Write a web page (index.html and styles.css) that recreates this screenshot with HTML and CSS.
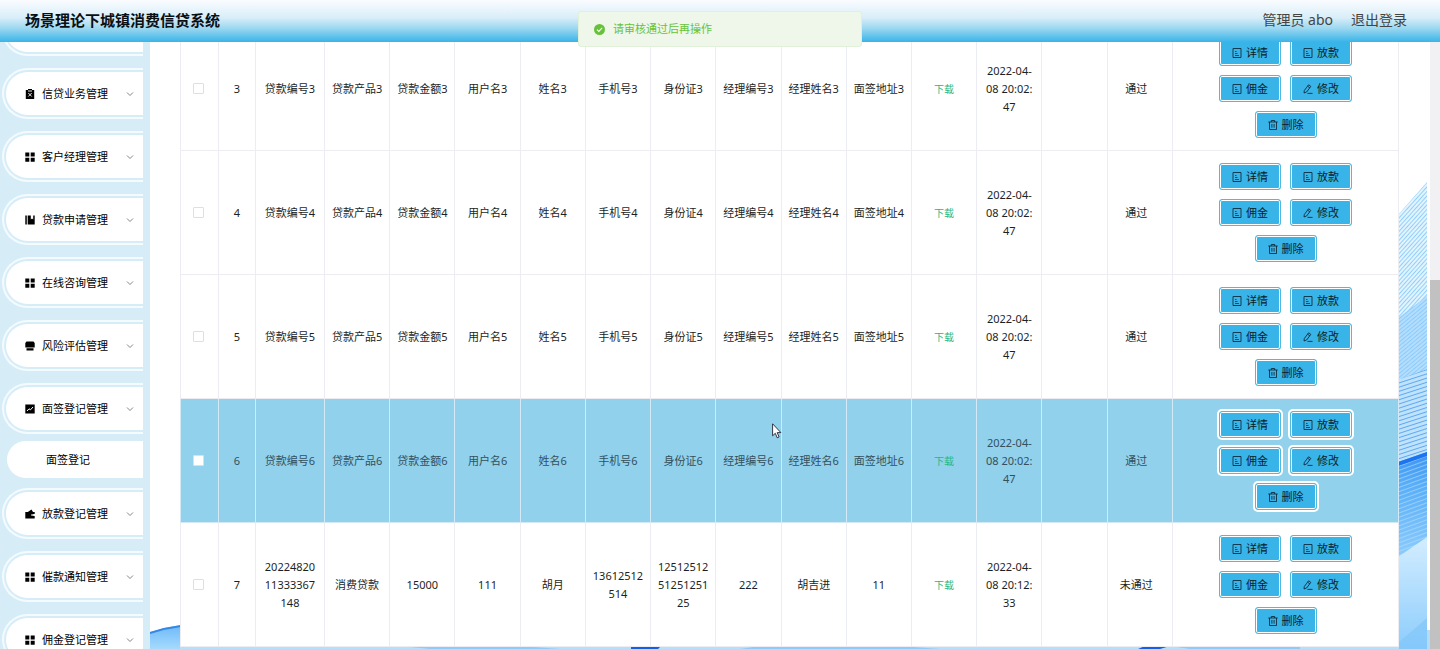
FILE: index.html
```html
<!DOCTYPE html>
<html lang="zh-CN">
<head>
<meta charset="utf-8">
<title>场景理论下城镇消费信贷系统</title>
<link rel="stylesheet" href="styles.css">
</head>
<body>
<svg class="sprite" aria-hidden="true">
  <symbol id="i-doc" viewBox="0 0 10 10"><path d="M1 .5h8v9H1z" fill="none" stroke="currentColor" stroke-width=".8"/><path d="M3 3.500h1.500M3 5.500h2.500M3 7.500h4" fill="none" stroke="currentColor" stroke-width=".7"/></symbol>
  <symbol id="i-edit" viewBox="0 0 10 10"><path d="M1.300 6.500 5.600.8 7.800 2.400 3.600 8 1 9zM4.500 9.400h5M4.600 2.200l2.200 1.600" fill="none" stroke="currentColor" stroke-width=".8"/></symbol>
  <symbol id="i-del" viewBox="0 0 10 10"><path d="M.3 2h9.400M1.500 2v7.500h7V2M3.300 2V.5h3.400V2M3.900 4v3.700M6.100 4v3.700" fill="none" stroke="currentColor" stroke-width=".8"/></symbol>
  <symbol id="i-grid" viewBox="0 0 10 10"><path d="M.3.5h4v4h-4zM5.700.5h4v4h-4zM.3 5.700h4v4h-4zM5.700 5.700h4v4h-4z"/></symbol>
  <symbol id="i-clip" viewBox="0 0 10 10"><path d="M.8 1H3V0h4v1h2.200v9H.8z"/><path d="M3.300 4l3.400 3.500M6.700 4 3.300 7.500M3 2h4" stroke="#fff" stroke-width=".9"/></symbol>
  <symbol id="i-book" viewBox="0 0 10 10"><path d="M.3.5h1.500v9H.3zM2.700.5h3.100v4l1.200-1 1.200 1v-4h1.500v9h-7z"/></symbol>
  <symbol id="i-print" viewBox="0 0 10 10"><path d="M1.500.5h7L9.700 2v4.500H.3V2zM1.500 7.300h7v2.200h-7z"/></symbol>
  <symbol id="i-chart" viewBox="0 0 10 10"><path d="M.3.5h9.400v9H.3z"/><path d="M2 7l2-2.200 1.500 1L8 3" fill="none" stroke="#fff"/></symbol>
  <symbol id="i-wallet" viewBox="0 0 10 10"><path d="M.3 3h2.500L6.500.5 8 3h1.700v2H6.500v2h3.200v2.500H.3zM7.300 5.600h1v.9h-1z"/></symbol>
  <symbol id="i-down" viewBox="0 0 8 8"><path d="M1 2.500 4 5.500 7 2.500" fill="none" stroke="currentColor" stroke-width=".9"/></symbol>
</svg>

<header class="topbar">
  <h1 class="brand">场景理论下城镇消费信贷系统</h1>
  <div class="account"><span>管理员 abo</span><a class="logout" href="#">退出登录</a></div>
</header>

<div class="toast" role="status">
  <svg class="toast-icon" viewBox="0 0 10 10"><circle cx="5" cy="5" r="5" fill="#67c23a"/><path d="M2.700 5.100 4.400 6.700 7.400 3.600" fill="none" stroke="#fff"/></svg>
  <span>请审核通过后再操作</span>
</div>

<div class="shell">
  <nav class="sidebar">
    <ul class="menu">
      <li class="menu-item"><button class="menu-btn" type="button"></button></li>
      <li class="menu-item"><button class="menu-btn" type="button"><svg class="icon"><use href="#i-clip"/></svg><span>信贷业务管理</span><svg class="arrow"><use href="#i-down"/></svg></button></li>
      <li class="menu-item"><button class="menu-btn" type="button"><svg class="icon"><use href="#i-grid"/></svg><span>客户经理管理</span><svg class="arrow"><use href="#i-down"/></svg></button></li>
      <li class="menu-item"><button class="menu-btn" type="button"><svg class="icon"><use href="#i-book"/></svg><span>贷款申请管理</span><svg class="arrow"><use href="#i-down"/></svg></button></li>
      <li class="menu-item"><button class="menu-btn" type="button"><svg class="icon"><use href="#i-grid"/></svg><span>在线咨询管理</span><svg class="arrow"><use href="#i-down"/></svg></button></li>
      <li class="menu-item"><button class="menu-btn" type="button"><svg class="icon"><use href="#i-print"/></svg><span>风险评估管理</span><svg class="arrow"><use href="#i-down"/></svg></button></li>
      <li class="menu-item open"><button class="menu-btn" type="button"><svg class="icon"><use href="#i-chart"/></svg><span>面签登记管理</span><svg class="arrow"><use href="#i-down"/></svg></button></li>
      <li class="submenu"><a class="sub-link" href="#">面签登记</a></li>
      <li class="menu-item"><button class="menu-btn" type="button"><svg class="icon"><use href="#i-wallet"/></svg><span>放款登记管理</span><svg class="arrow"><use href="#i-down"/></svg></button></li>
      <li class="menu-item"><button class="menu-btn" type="button"><svg class="icon"><use href="#i-grid"/></svg><span>催款通知管理</span><svg class="arrow"><use href="#i-down"/></svg></button></li>
      <li class="menu-item"><button class="menu-btn" type="button"><svg class="icon"><use href="#i-grid"/></svg><span>佣金登记管理</span><svg class="arrow"><use href="#i-down"/></svg></button></li>
    </ul>
  </nav>

  <main class="main">
    <svg class="backdrop" viewBox="150 42 1280 607" preserveAspectRatio="xMaxYMax slice" aria-hidden="true">
      <defs>
        <pattern id="p1" width="5" height="3" patternUnits="userSpaceOnUse" patternTransform="rotate(-48)"><rect width="5" height="3" fill="#e4f4ff"/><rect width="5" height="1" fill="#90d0fa"/></pattern>
        <pattern id="p2" width="4" height="3" patternUnits="userSpaceOnUse" patternTransform="rotate(-40)"><rect width="4" height="3" fill="#b4defd"/><rect width="4" height="1" fill="#8ccbfb"/></pattern>
        <pattern id="p3" width="6" height="4" patternUnits="userSpaceOnUse" patternTransform="rotate(-18)"><rect width="6" height="4" fill="#bfe3fd"/><rect width="6" height="1" fill="#5fa9f2"/></pattern>
        <pattern id="p4" width="6" height="4" patternUnits="userSpaceOnUse" patternTransform="rotate(-20)"><rect width="6" height="1" fill="#b5e0ff" fill-opacity=".6"/></pattern>
        <linearGradient id="g1" x1="0" y1="0" x2="0" y2="1"><stop offset="0" stop-color="#3b92f2"/><stop offset=".3" stop-color="#58aef8"/><stop offset="1" stop-color="#8fcdfc"/></linearGradient>
        <linearGradient id="g2" x1="0" y1="0" x2="0" y2="1"><stop offset="0" stop-color="#d3edff"/><stop offset="1" stop-color="#8dcdfc"/></linearGradient>
        <linearGradient id="g3" x1="0" y1="0" x2="0" y2="1"><stop offset="0" stop-color="#6db9f8"/><stop offset="1" stop-color="#a6dafd"/></linearGradient>
      </defs>
      <path d="M1398 215 1427 182V300L1398 322z" fill="url(#p1)"/>
      <path d="M1398 318 1427 296V373L1398 382z" fill="url(#p2)"/>
      <path d="M1398 380 1427 369V455L1398 464z" fill="url(#p3)"/>
      <path d="M1398 462 1427 452V542L1398 560z" fill="url(#g1)"/>
      <path d="M1398 462 1427 452V542L1398 560z" fill="url(#p4)"/>
      <path d="M1398 462 1427 452V456L1398 466z" fill="#1c74f0"/>
      <path d="M1398 557 1427 537V649H1398z" fill="url(#g2)"/>
      <path d="M1398 643 1427 618V630H1430V649H1398z" fill="#7fc5f9" fill-opacity=".6"/>
      <path d="M150 632Q165 627 181 625V649H150z" fill="url(#g3)"/>
      <path d="M150 632Q165 627 181 625V627Q165 629 150 634z" fill="#3587e4"/>
      <path d="M180 646H1399V649H180z" fill="#b4e0fd"/>
      <path d="M400 646H520L560 649H430zM760 646H900L940 649H740zM1170 646H1300V649H1190z" fill="#8ccbfa"/>
      <path d="M631 646H661L658 649H631zM1145 646H1170L1160 649H1138z" fill="#1260e8"/>
    </svg>
    <table class="grid">
      <colgroup><col class="c-check"><col class="c-index"><col class="c-code"><col span="13"><col class="c-action"></colgroup>
      <tbody>
        <tr>
          <td><input class="check" type="checkbox" aria-label="选择第3行"></td><td>3</td><td>贷款编号3</td><td>贷款产品3</td><td>贷款金额3</td><td>用户名3</td><td>姓名3</td><td>手机号3</td><td>身份证3</td><td>经理编号3</td><td>经理姓名3</td><td>面签地址3</td><td><a class="download" href="#">下载</a></td><td>2022-04-<br>08 20:02:<br>47</td><td></td><td class="status">通过</td>
          <td><div class="actions"><button class="btn" type="button"><svg class="icon"><use href="#i-doc"/></svg>详情</button><button class="btn" type="button"><svg class="icon"><use href="#i-doc"/></svg>放款</button><button class="btn" type="button"><svg class="icon"><use href="#i-doc"/></svg>佣金</button><button class="btn" type="button"><svg class="icon"><use href="#i-edit"/></svg>修改</button><button class="btn" type="button"><svg class="icon"><use href="#i-del"/></svg>删除</button></div></td>
        </tr>
        <tr>
          <td><input class="check" type="checkbox" aria-label="选择第4行"></td><td>4</td><td>贷款编号4</td><td>贷款产品4</td><td>贷款金额4</td><td>用户名4</td><td>姓名4</td><td>手机号4</td><td>身份证4</td><td>经理编号4</td><td>经理姓名4</td><td>面签地址4</td><td><a class="download" href="#">下载</a></td><td>2022-04-<br>08 20:02:<br>47</td><td></td><td class="status">通过</td>
          <td><div class="actions"><button class="btn" type="button"><svg class="icon"><use href="#i-doc"/></svg>详情</button><button class="btn" type="button"><svg class="icon"><use href="#i-doc"/></svg>放款</button><button class="btn" type="button"><svg class="icon"><use href="#i-doc"/></svg>佣金</button><button class="btn" type="button"><svg class="icon"><use href="#i-edit"/></svg>修改</button><button class="btn" type="button"><svg class="icon"><use href="#i-del"/></svg>删除</button></div></td>
        </tr>
        <tr>
          <td><input class="check" type="checkbox" aria-label="选择第5行"></td><td>5</td><td>贷款编号5</td><td>贷款产品5</td><td>贷款金额5</td><td>用户名5</td><td>姓名5</td><td>手机号5</td><td>身份证5</td><td>经理编号5</td><td>经理姓名5</td><td>面签地址5</td><td><a class="download" href="#">下载</a></td><td>2022-04-<br>08 20:02:<br>47</td><td></td><td class="status">通过</td>
          <td><div class="actions"><button class="btn" type="button"><svg class="icon"><use href="#i-doc"/></svg>详情</button><button class="btn" type="button"><svg class="icon"><use href="#i-doc"/></svg>放款</button><button class="btn" type="button"><svg class="icon"><use href="#i-doc"/></svg>佣金</button><button class="btn" type="button"><svg class="icon"><use href="#i-edit"/></svg>修改</button><button class="btn" type="button"><svg class="icon"><use href="#i-del"/></svg>删除</button></div></td>
        </tr>
        <tr class="active">
          <td><input class="check" type="checkbox" aria-label="选择第6行"></td><td>6</td><td>贷款编号6</td><td>贷款产品6</td><td>贷款金额6</td><td>用户名6</td><td>姓名6</td><td>手机号6</td><td>身份证6</td><td>经理编号6</td><td>经理姓名6</td><td>面签地址6</td><td><a class="download" href="#">下载</a></td><td>2022-04-<br>08 20:02:<br>47</td><td></td><td class="status">通过</td>
          <td><div class="actions"><button class="btn" type="button"><svg class="icon"><use href="#i-doc"/></svg>详情</button><button class="btn" type="button"><svg class="icon"><use href="#i-doc"/></svg>放款</button><button class="btn" type="button"><svg class="icon"><use href="#i-doc"/></svg>佣金</button><button class="btn" type="button"><svg class="icon"><use href="#i-edit"/></svg>修改</button><button class="btn" type="button"><svg class="icon"><use href="#i-del"/></svg>删除</button></div></td>
        </tr>
        <tr>
          <td><input class="check" type="checkbox" aria-label="选择第7行"></td><td>7</td><td>20224820<br>11333367<br>148</td><td>消费贷款</td><td>15000</td><td>111</td><td>胡月</td><td>13612512<br>514</td><td>12512512<br>51251251<br>25</td><td>222</td><td>胡吉进</td><td>11</td><td><a class="download" href="#">下载</a></td><td>2022-04-<br>08 20:12:<br>33</td><td></td><td class="status">未通过</td>
          <td><div class="actions"><button class="btn" type="button"><svg class="icon"><use href="#i-doc"/></svg>详情</button><button class="btn" type="button"><svg class="icon"><use href="#i-doc"/></svg>放款</button><button class="btn" type="button"><svg class="icon"><use href="#i-doc"/></svg>佣金</button><button class="btn" type="button"><svg class="icon"><use href="#i-edit"/></svg>修改</button><button class="btn" type="button"><svg class="icon"><use href="#i-del"/></svg>删除</button></div></td>
        </tr>
      </tbody>
    </table>
  </main>
  <div class="scroll-track"><div class="scroll-thumb"></div></div>
</div>
<svg class="pointer" viewBox="0 0 10 16" aria-hidden="true"><path d="M.6.8v12l2.700-2.500 1.900 4.500 1.900-.8-1.900-4.400h3.700z" fill="#fff" stroke="#223" stroke-width=".9"/></svg>
</body>
</html>
```
FILE: styles.css
```css
* { box-sizing: border-box; }

body {
  margin: 0;
  height: 100vh;
  display: flex;
  flex-direction: column;
  overflow: hidden;
  background: #fff;
  color: #1c1f24;
  font: 11px/18px "Noto Sans", "Noto Sans CJK SC", sans-serif;
}

button { font: inherit; color: inherit; cursor: pointer; }
a { text-decoration: none; }
.sprite { display: none; }
.icon { width: 10px; height: 10px; flex: none; }

.topbar {
  flex: none;
  height: 42px;
  padding: 0 33px 2px 25px;
  display: flex;
  align-items: center;
  justify-content: space-between;
  background: linear-gradient(#fafcff 0%, #d9eef8 42%, #9ad7f0 68%, #38b4e8 100%);
}
.brand { margin: 0; font-size: 15px; line-height: 20px; font-weight: 700; color: #0a0f14; }
.account { display: flex; gap: 18px; font-size: 14px; line-height: 20px; color: #444; }
.logout { color: #444; }

.toast {
  position: absolute;
  top: 11px;
  left: 50%;
  transform: translateX(-50%);
  width: 284px;
  height: 36px;
  padding: 0 15px;
  display: flex;
  align-items: center;
  gap: 8px;
  border: 1px solid #e1f0d8;
  border-radius: 3px;
  background: #eff7ea;
  color: #67c23a;
  z-index: 2;
}
.toast-icon { width: 11px; height: 11px; }

.shell { flex: 1; min-height: 0; display: flex; }

.sidebar { flex: none; width: 150px; overflow: hidden; background: #d6edf8; color: #000; }
.menu { list-style: none; margin: -37px 7px 0 2px; padding: 0; }
.menu-item {
  height: 51px;
  margin-bottom: 12px;
  padding: 2px 0 2px 2px;
  border: 2px solid #f4fbff;
  border-right: 0;
  border-radius: 26px 0 0 26px;
}
.menu-item.open { margin-bottom: 7px; }
.menu-btn {
  width: 100%;
  height: 100%;
  padding: 0 9px 0 19px;
  display: flex;
  align-items: center;
  gap: 7px;
  border: 0;
  border-radius: 22px 0 0 22px;
  background: #fff;
}
.arrow { width: 8px; height: 8px; margin-left: auto; color: #777; }
.submenu { margin: 0 0 10px 5px; }
.sub-link {
  display: block;
  padding: 10px 0 9px 39px;
  border-radius: 19px 0 0 19px;
  background: #fff;
  color: #000;
}

.main { position: relative; flex: 1; min-width: 0; overflow: hidden; padding: 0 31px 0 30px; }
.backdrop { position: absolute; inset: 0; width: 100%; height: 100%; }

.grid {
  position: relative;
  width: 100%;
  margin-top: -16px;
  table-layout: fixed;
  border-collapse: collapse;
  background: #fff;
}
.c-check { width: 38px; }
.c-index { width: 37px; }
.c-code { width: 69px; }
.c-action { width: 226px; }
.grid td {
  height: 124px;
  padding: 0;
  border: 1px solid #ebedf2;
  text-align: center;
  vertical-align: middle;
  white-space: nowrap;
}
.grid .status { padding-right: 7px; }
.grid td:first-child { padding-right: 2px; }
.active td { background: #92d1eb; color: #33505e; }
.grid .active td { border-color: #d3eaf6; }
.check {
  appearance: none;
  display: block;
  width: 11px;
  height: 11px;
  margin: 0 auto;
  border: 1px solid #dcdfe6;
  border-radius: 1px;
  background: #fff;
}
.download { color: #1bb98a; font-size: 10px; }

.actions { display: flex; flex-wrap: wrap; justify-content: center; gap: 9px; padding: 0 40px; }
.btn {
  width: 62px;
  height: 27px;
  padding: 0;
  display: flex;
  align-items: center;
  justify-content: center;
  gap: 4px;
  border: 1px solid #52b9d8;
  border-radius: 3px;
  background: #38b4e8;
  box-shadow: inset 0 0 0 1px #fff, 0 0 0 2px #fff;
  color: #0b1c28;
}

.scroll-track { flex: none; width: 10px; background: #f1f0f3; padding-top: 238px; }
.scroll-thumb { height: 100%; background: #c1c1c1; }

.pointer { position: absolute; left: 772px; top: 423px; width: 10px; height: 16px; z-index: 3; }
```
